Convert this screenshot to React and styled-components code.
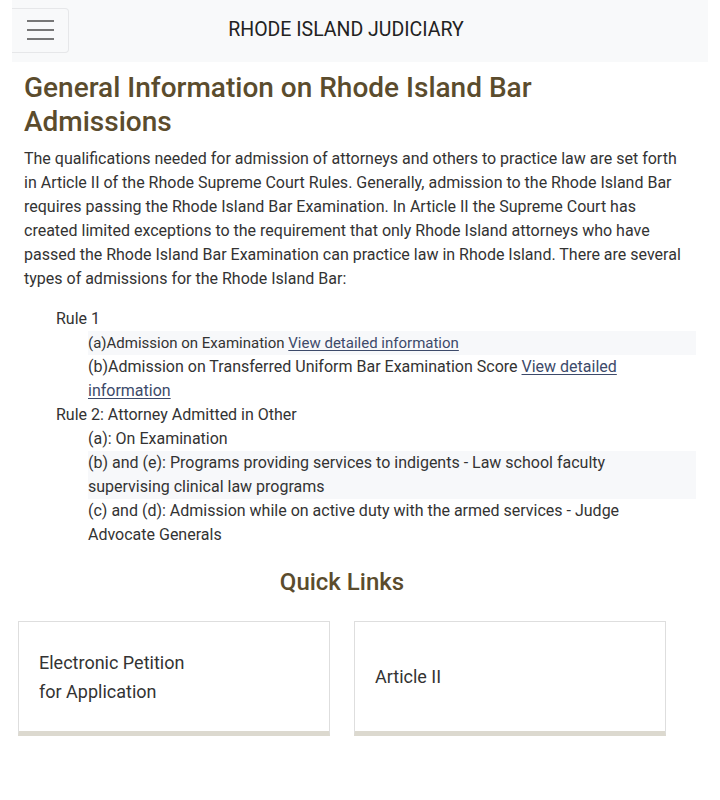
import React from "react";
import styled, { createGlobalStyle } from "styled-components";

const Global = createGlobalStyle`
  html, body { margin: 0; padding: 0; background: #fff; }
  body { font-family: Roboto, "Liberation Sans", sans-serif; color: #333; }
  * { box-sizing: border-box; }
`;

const Page = styled.div`
  width: 720px;
  padding: 0 12px;
`;

const Header = styled.header`
  display: flex;
  align-items: center;
  height: 62px;
  background: #f8f9fa;
`;

const MenuButton = styled.button`
  width: 57px;
  height: 45px;
  margin-top: -2px;
  border: 1px solid #e6e7e9;
  border-left: none;
  border-radius: 0 4px 4px 0;
  background: transparent;
  display: flex;
  flex-direction: column;
  justify-content: center;
  align-items: center;
  gap: 7px;
  padding: 0;
`;

const Bar = styled.span`
  display: block;
  width: 27px;
  height: 2px;
  background: #777;
`;

const Title = styled.div`
  flex: 1;
  text-align: center;
  font-size: 19.5px;
  color: #222;
  margin-right: 85px;
  margin-top: -3px;
`;

const Content = styled.main`
  padding: 9px 22px 0 12px;
`;

const H1 = styled.h1`
  margin: 0 0 8px;
  font-size: 28px;
  line-height: 34px;
  font-weight: 500;
  color: #5b4c2d;
`;

const P = styled.p`
  margin: 0 0 16px;
  font-size: 16px;
  line-height: 24px;
  color: #333;
`;

const RuleList = styled.ul`
  list-style: none;
  margin: 0;
  padding: 0 0 0 32px;
  font-size: 16px;
  line-height: 24px;
  color: #333;
`;

const SubList = styled.ul`
  list-style: none;
  margin: 0 -10px 0 0;
  padding: 0 0 0 32px;
`;

const SubItem = styled.li`
  padding-right: 12px;
  font-size: ${(p) => (p.$small ? "15px" : "16px")};
  background: ${(p) => (p.$striped ? "#f7f8fa" : "transparent")};
`;

const Link = styled.a`
  color: #3d4a6a;
  text-decoration: underline;
  text-underline-offset: 2px;
`;

const QuickLinks = styled.section`
  width: 648px;
  margin-left: 6px;
`;

const H2 = styled.h2`
  margin: 19px 0 23px;
  text-align: center;
  font-size: 24px;
  line-height: 32px;
  font-weight: 500;
  color: #5b4c2d;
`;

const Cards = styled.div`
  display: flex;
  gap: 24px;
`;

const Card = styled.a`
  width: 312px;
  height: 115px;
  border: 1px solid #dedede;
  border-bottom: 5px solid #dcd9cf;
  display: flex;
  align-items: center;
  padding: 0 20px;
  font-size: 18px;
  line-height: 29px;
  color: #333;
  text-decoration: none;
`;

export default function App() {
  return (
    <>
      <Global />
      <Page>
        <Header>
          <MenuButton aria-label="menu">
            <Bar />
            <Bar />
            <Bar />
          </MenuButton>
          <Title>RHODE ISLAND JUDICIARY</Title>
        </Header>
        <Content>
          <H1>General Information on Rhode Island Bar Admissions</H1>
          <P>
            The qualifications needed for admission of attorneys and others to practice law are set forth in
            Article II of the Rhode Supreme Court Rules. Generally, admission to the Rhode Island Bar requires
            passing the Rhode Island Bar Examination. In Article II the Supreme Court has created limited
            exceptions to the requirement that only Rhode Island attorneys who have passed the Rhode Island Bar
            Examination can practice law in Rhode Island. There are several types of admissions for the Rhode
            Island Bar:
          </P>
          <RuleList>
            <li>
              Rule 1
              <SubList>
                <SubItem $striped $small>
                  (a)Admission on Examination <Link href="#">View detailed information</Link>
                </SubItem>
                <SubItem>
                  (b)Admission on Transferred Uniform Bar Examination Score{" "}
                  <Link href="#">View detailed information</Link>
                </SubItem>
              </SubList>
            </li>
            <li>
              Rule 2: Attorney Admitted in Other
              <SubList>
                <SubItem>(a): On Examination</SubItem>
                <SubItem $striped>
                  (b) and (e): Programs providing services to indigents - Law school faculty supervising clinical
                  law programs
                </SubItem>
                <SubItem>
                  (c) and (d): Admission while on active duty with the armed services - Judge Advocate Generals
                </SubItem>
              </SubList>
            </li>
          </RuleList>
        </Content>
        <QuickLinks>
          <H2>Quick Links</H2>
          <Cards>
            <Card href="#">
              Electronic Petition
              <br />
              for Application
            </Card>
            <Card href="#">Article II</Card>
          </Cards>
        </QuickLinks>
      </Page>
    </>
  );
}
